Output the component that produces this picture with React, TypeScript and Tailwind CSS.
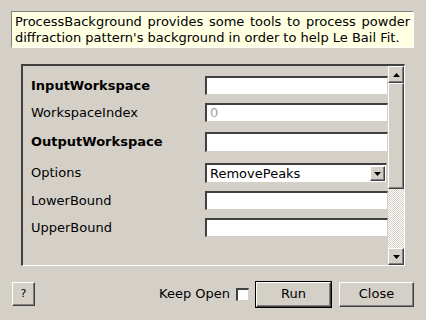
const sunken =
  "border-t-2 border-l-2 border-b border-r border-t-[#404040] border-l-[#404040] border-b-[#d4d0c8] border-r-[#d4d0c8] shadow-[inset_-1px_-1px_0_#ffffff]";

const raised =
  "border border-t-white border-l-white border-b-[#404040] border-r-[#404040] shadow-[inset_-1px_-1px_0_#808080]";

function Field({ value, muted }: { value?: string; muted?: boolean }) {
  return (
    <div className={`h-full w-[200px] bg-white ${sunken} pl-[3px] flex items-center ${muted ? "text-[#a0a0a0]" : ""}`}>
      {value}
    </div>
  );
}

function Row({
  label,
  bold,
  mt,
  h,
  children,
}: {
  label: string;
  bold?: boolean;
  mt: string;
  h: string;
  children: React.ReactNode;
}) {
  return (
    <div className={`flex items-center ${mt} ${h}`}>
      <div className={`w-[182px] shrink-0 pl-[8px] ${bold ? "font-bold" : ""}`}>{label}</div>
      {children}
    </div>
  );
}

function Arrow({ up }: { up?: boolean }) {
  return (
    <svg width="7" height="4" viewBox="0 0 7 4">
      <path d={up ? "M3.5 0 L7 4 L0 4 Z" : "M0 0 L7 0 L3.5 4 Z"} fill="#000" />
    </svg>
  );
}

export default function App() {
  return (
    <div className="w-[426px] h-[320px] bg-[#d4d0c8] text-[13px] text-black font-['DejaVu_Sans',sans-serif] flex flex-col overflow-hidden">
      <div className="mt-[11px] ml-[11px] w-[403px] h-[37px] bg-[#ffffe1] border-t border-l border-t-[#808080] border-l-[#808080] border-b border-r border-b-white border-r-white px-[3px] pt-[2px] leading-[16px] text-justify [text-align-last:left]">
        ProcessBackground provides some tools to process powder diffraction pattern's background in order to help Le Bail Fit.
      </div>

      <div className="mt-[16px] ml-[21px] w-[384px] h-[202px] border-t-2 border-l-2 border-t-[#404040] border-l-[#404040] border-b border-r border-b-white border-r-white flex">
        <div className="flex-1 overflow-hidden flex flex-col">
          <Row label="InputWorkspace" bold mt="mt-[10px]" h="h-[19px]">
            <Field />
          </Row>
          <Row label="WorkspaceIndex" mt="mt-[8px]" h="h-[19px]">
            <Field value="0" muted />
          </Row>
          <Row label="OutputWorkspace" bold mt="mt-[10px]" h="h-[20px]">
            <Field />
          </Row>
          <Row label="Options" mt="mt-[11px]" h="h-[20px]">
            <div className={`h-full w-[182px] shrink-0 bg-white ${sunken} flex items-center pl-[3px]`}>
              <span className="flex-1">RemovePeaks</span>
              <div className={`w-[15px] h-[15px] mr-[1px] bg-[#d4d0c8] ${raised} flex items-center justify-center`}>
                <Arrow />
              </div>
            </div>
          </Row>
          <Row label="LowerBound" mt="mt-[8px]" h="h-[19px]">
            <Field />
          </Row>
          <Row label="UpperBound" mt="mt-[8px]" h="h-[19px]">
            <Field />
          </Row>
        </div>

        <div className="w-[16px] flex flex-col">
          <div className={`h-[17px] bg-[#d4d0c8] ${raised} flex items-center justify-center`}>
            <Arrow up />
          </div>
          <div className={`h-[106px] bg-[#d4d0c8] ${raised}`} />
          <div className="flex-1 bg-[repeating-conic-gradient(#d4d0c8_0_25%,#ffffff_0_50%)] bg-[length:2px_2px]" />
          <div className={`h-[17px] bg-[#d4d0c8] ${raised} flex items-center justify-center`}>
            <Arrow />
          </div>
        </div>
      </div>

      <div className="mt-[15px] flex items-center h-[26px]">
        <button className={`ml-[12px] w-[23px] h-[24px] bg-[#d4d0c8] ${raised} text-[11px] flex items-center justify-center`}>
          ?
        </button>
        <span className="ml-auto">Keep Open</span>
        <span className={`ml-[6px] w-[13px] h-[13px] bg-white ${sunken}`} />
        <button className="ml-[6px] w-[77px] h-[27px] border border-black bg-[#d4d0c8] flex">
          <span className={`flex-1 ${raised} flex items-center justify-center`}>Run</span>
        </button>
        <button className={`ml-[7px] mr-[12px] w-[75px] h-[25px] bg-[#d4d0c8] ${raised} flex items-center justify-center`}>
          Close
        </button>
      </div>
    </div>
  );
}
